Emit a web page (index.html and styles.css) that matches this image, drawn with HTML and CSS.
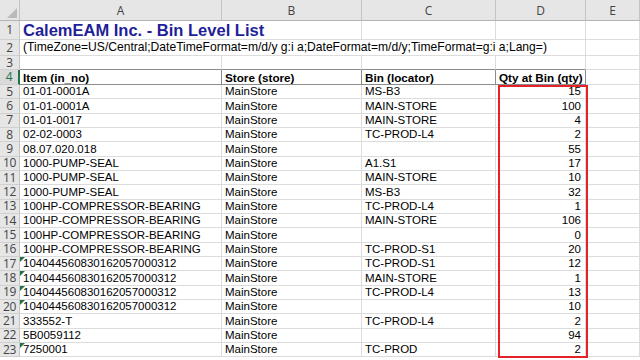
FILE: index.html
```html
<!DOCTYPE html>
<html>
<head>
<meta charset="utf-8">
<link rel="stylesheet" href="styles.css">
</head>
<body>
<div class="sheet">
  <div class="corner"><span class="tri"></span></div>
  <div class="ch">A</div><div class="ch">B</div><div class="ch">C</div><div class="ch">D</div><div class="ch">E</div>

  <div class="rh r1">1</div>
  <div class="c title span2">CalemEAM Inc. - Bin Level List</div><div class="c"></div><div class="c"></div><div class="c"></div>

  <div class="rh r2">2</div>
  <div class="c params span4">(TimeZone=US/Central;DateTimeFormat=m/d/y g:i a;DateFormat=m/d/y;TimeFormat=g:i a;Lang=)</div><div class="c"></div>

  <div class="rh">3</div>
  <div class="c under"></div><div class="c under"></div><div class="c under"></div><div class="c under"></div><div class="c"></div>

  <div class="rh sel">4</div>
  <div class="c hd first">Item (in_no)</div><div class="c hd">Store (store)</div><div class="c hd">Bin (locator)</div><div class="c hd">Qty at Bin (qty)</div><div class="c"></div>

  <div class="rh">5</div><div class="c">01-01-0001A</div><div class="c">MainStore</div><div class="c">MS-B3</div><div class="c num">15</div><div class="c"></div>
  <div class="rh">6</div><div class="c">01-01-0001A</div><div class="c">MainStore</div><div class="c">MAIN-STORE</div><div class="c num">100</div><div class="c"></div>
  <div class="rh">7</div><div class="c">01-01-0017</div><div class="c">MainStore</div><div class="c">MAIN-STORE</div><div class="c num">4</div><div class="c"></div>
  <div class="rh">8</div><div class="c">02-02-0003</div><div class="c">MainStore</div><div class="c">TC-PROD-L4</div><div class="c num">2</div><div class="c"></div>
  <div class="rh">9</div><div class="c">08.07.020.018</div><div class="c">MainStore</div><div class="c"></div><div class="c num">55</div><div class="c"></div>
  <div class="rh">10</div><div class="c">1000-PUMP-SEAL</div><div class="c">MainStore</div><div class="c">A1.S1</div><div class="c num">17</div><div class="c"></div>
  <div class="rh">11</div><div class="c">1000-PUMP-SEAL</div><div class="c">MainStore</div><div class="c">MAIN-STORE</div><div class="c num">10</div><div class="c"></div>
  <div class="rh">12</div><div class="c">1000-PUMP-SEAL</div><div class="c">MainStore</div><div class="c">MS-B3</div><div class="c num">32</div><div class="c"></div>
  <div class="rh">13</div><div class="c">100HP-COMPRESSOR-BEARING</div><div class="c">MainStore</div><div class="c">TC-PROD-L4</div><div class="c num">1</div><div class="c"></div>
  <div class="rh">14</div><div class="c">100HP-COMPRESSOR-BEARING</div><div class="c">MainStore</div><div class="c">MAIN-STORE</div><div class="c num">106</div><div class="c"></div>
  <div class="rh">15</div><div class="c">100HP-COMPRESSOR-BEARING</div><div class="c">MainStore</div><div class="c"></div><div class="c num">0</div><div class="c"></div>
  <div class="rh">16</div><div class="c">100HP-COMPRESSOR-BEARING</div><div class="c">MainStore</div><div class="c">TC-PROD-S1</div><div class="c num">20</div><div class="c"></div>
  <div class="rh">17</div><div class="c txt">104044560830162057000312</div><div class="c">MainStore</div><div class="c">TC-PROD-S1</div><div class="c num">12</div><div class="c"></div>
  <div class="rh">18</div><div class="c txt">104044560830162057000312</div><div class="c">MainStore</div><div class="c">MAIN-STORE</div><div class="c num">1</div><div class="c"></div>
  <div class="rh">19</div><div class="c txt">104044560830162057000312</div><div class="c">MainStore</div><div class="c">TC-PROD-L4</div><div class="c num">13</div><div class="c"></div>
  <div class="rh">20</div><div class="c txt">104044560830162057000312</div><div class="c">MainStore</div><div class="c"></div><div class="c num">10</div><div class="c"></div>
  <div class="rh">21</div><div class="c">333552-T</div><div class="c">MainStore</div><div class="c">TC-PROD-L4</div><div class="c num">2</div><div class="c"></div>
  <div class="rh">22</div><div class="c">5B0059112</div><div class="c">MainStore</div><div class="c"></div><div class="c num">94</div><div class="c"></div>
  <div class="rh">23</div><div class="c txt">7250001</div><div class="c">MainStore</div><div class="c">TC-PROD</div><div class="c num">2</div><div class="c"></div>

  <div class="redbox"></div>
</div>
</body>
</html>
```
FILE: styles.css
```css
html, body {
  margin: 0;
  padding: 0;
  background: #ffffff;
  width: 640px;
  height: 360px;
  overflow: hidden;
}
.sheet {
  position: relative;
  display: grid;
  grid-template-columns: 20px 202px 140px 134px 90px 54px;
  grid-template-rows: 21px 19px 16px 14px 15px repeat(19, 14.33px);
  font-family: "Liberation Sans", Arial, sans-serif;
  font-size: 11.5px;
  color: #000;
}
.corner {
  background: #e6e6e6;
  border-right: 1px solid #c4c4c4;
  border-bottom: 1px solid #b4b4b4;
  position: relative;
}
.tri {
  position: absolute;
  right: 2px;
  bottom: 2px;
  width: 0;
  height: 0;
  border-left: 10px solid transparent;
  border-bottom: 10px solid #b9b9b9;
}
.ch {
  background: #e6e6e6;
  border-right: 1px solid #c4c4c4;
  border-bottom: 1px solid #b4b4b4;
  display: flex;
  align-items: center;
  justify-content: center;
  font-family: "Open Sans", "Noto Sans", sans-serif;
  font-size: 12px;
  line-height: 14px;
  color: #444;
  padding-top: 1px;
}
.rh {
  box-sizing: border-box;
  background: #e6e6e6;
  border-right: 1px solid #c4c4c4;
  border-bottom: 1px solid #d0d0d0;
  display: flex;
  align-items: center;
  justify-content: center;
  font-family: "Open Sans", "Noto Sans", sans-serif;
  font-size: 12px;
  color: #444;
  line-height: 12px;
  letter-spacing: -0.3px;
  overflow: hidden;
}
.rh.sel {
  color: #217346;
  border-right: 2px solid #217346;
  background: #dadada;
}
.c {
  box-sizing: border-box;
  border-right: 1px solid #dcdcdc;
  border-bottom: 1px solid #dcdcdc;
  padding: 0 3px;
  white-space: nowrap;
  overflow: hidden;
  display: flex;
  align-items: flex-end;
  line-height: 13px;
  position: relative;
}
.span2 { grid-column: span 2; }
.span4 { grid-column: span 4; }
.title {
  font-size: 16.5px;
  font-weight: bold;
  color: #1f1f9a;
  line-height: 19px;
  align-items: center;
}
.params { font-size: 12.1px; line-height: 15px; }
.under { border-bottom: 1px solid #8c8c8c; }
.hd {
  font-weight: bold;
  font-size: 11.7px;
  border-right: 1px solid #8c8c8c;
  border-bottom: 1px solid #8c8c8c;
}
.num { justify-content: flex-end; padding-right: 4px; }
.txt::before {
  content: "";
  position: absolute;
  left: 0;
  top: 0;
  width: 0;
  height: 0;
  border-top: 5px solid #217346;
  border-right: 5px solid transparent;
}
.redbox {
  position: absolute;
  left: 498px;
  top: 85px;
  width: 90px;
  height: 273px;
  box-sizing: border-box;
  border: 2px solid #e4222a;
  pointer-events: none;
}
```
